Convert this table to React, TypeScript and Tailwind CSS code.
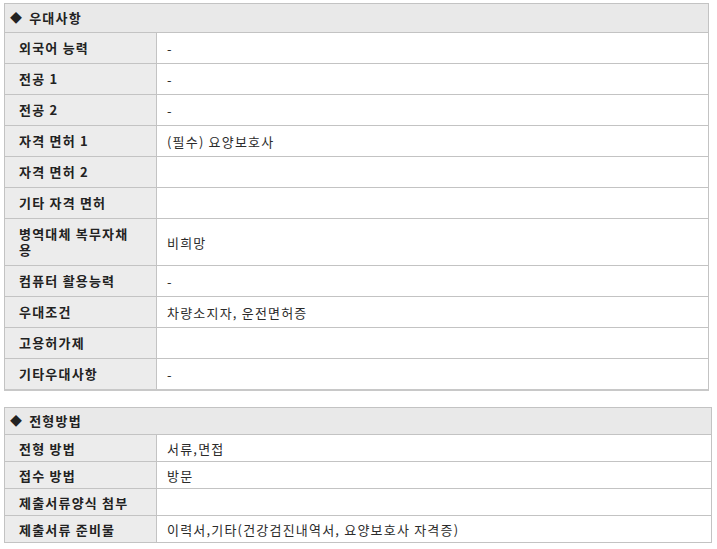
import React from "react";

type Row = { label: string; value?: string };

const benefits: Row[] = [
  { label: "외국어 능력", value: "-" },
  { label: "전공 1", value: "-" },
  { label: "전공 2", value: "-" },
  { label: "자격 면허 1", value: "(필수) 요양보호사" },
  { label: "자격 면허 2" },
  { label: "기타 자격 면허" },
  { label: "병역대체 복무자채용", value: "비희망" },
  { label: "컴퓨터 활용능력", value: "-" },
  { label: "우대조건", value: "차량소지자, 운전면허증" },
  { label: "고용허가제" },
  { label: "기타우대사항", value: "-" },
];

const selection: Row[] = [
  { label: "전형 방법", value: "서류,면접" },
  { label: "접수 방법", value: "방문" },
  { label: "제출서류양식 첨부" },
  { label: "제출서류 준비물", value: "이력서,기타(건강검진내역서, 요양보호사 자격증)" },
];

function Section({
  title,
  rows,
  compact,
  className,
}: {
  title: string;
  rows: Row[];
  compact?: boolean;
  className: string;
}) {
  return (
    <div className={`border border-[#c3c3c3] ${className}`}>
      <div
        className={`flex items-center bg-[#e9e9e9] pl-[5px] font-bold text-[#222] ${
          compact ? "h-[26px]" : "h-[28px]"
        }`}
      >
        <span className="mr-[6px] text-[12px]">◆</span>
        {title}
      </div>
      {rows.map((r) => (
        <div key={r.label} className="grid grid-cols-[152px_1fr] border-t border-[#c3c3c3]">
          <div
            className={`flex items-center border-r border-[#c3c3c3] bg-[#ececec] pl-[14px] pr-[24px] font-bold text-[#222] ${
              compact ? "leading-[15px] pt-[6px] pb-[5px]" : "leading-[16px] pt-[7px] pb-[7px]"
            }`}
          >
            {r.label}
          </div>
          <div className="flex items-center pl-[10px] text-[#2b2b2b] leading-[15px]">{r.value}</div>
        </div>
      ))}
    </div>
  );
}

export default function App() {
  return (
    <div
      className="min-h-screen bg-white pt-[3px] pl-[4px] text-[13px] tracking-[1.2px]"
      style={{ fontFamily: '"Noto Sans CJK KR", "Noto Sans", sans-serif' }}
    >
      <Section title="우대사항" rows={benefits} className="w-[705px] border-b-2 border-b-[#c8c8c8]" />
      <Section title="전형방법" rows={selection} compact className="mt-[16px] w-[708px]" />
    </div>
  );
}
